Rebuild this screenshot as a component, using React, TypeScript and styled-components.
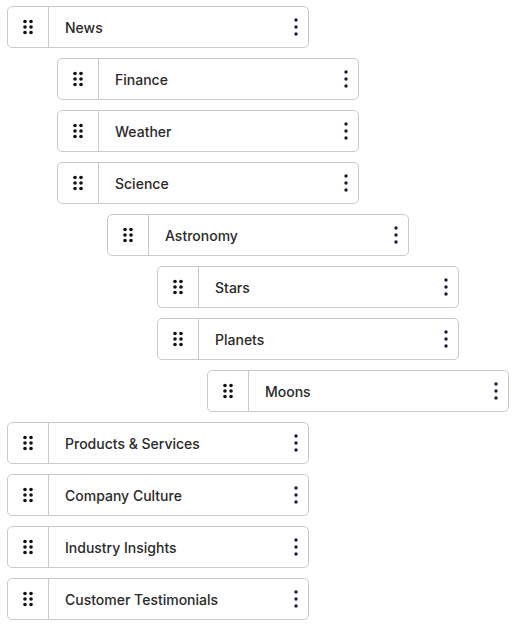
import React from "react";
import styled, { createGlobalStyle } from "styled-components";

const Global = createGlobalStyle`
  html, body { margin: 0; padding: 0; background: #ffffff; }
  body { font-family: Inter, "Noto Sans", sans-serif; }
`;

const List = styled.div`
  display: flex;
  flex-direction: column;
  gap: 10px;
  padding: 6px 0 0 7px;
`;

const Row = styled.div<{ $level: number }>`
  display: flex;
  align-items: stretch;
  box-sizing: border-box;
  width: 302px;
  height: 42px;
  margin-left: ${(p) => p.$level * 50}px;
  border: 1px solid #c9c9c9;
  border-radius: 5px;
  background: #fff;
`;

const Handle = styled.div`
  width: 40px;
  flex: none;
  display: flex;
  align-items: center;
  justify-content: center;
  border-right: 1px solid #c9c9c9;
  color: #111;
`;

const Label = styled.div`
  flex: 1;
  display: flex;
  align-items: center;
  padding-left: 16px;
  font-size: 14px;
  font-weight: 500;
  color: #2a2a2a;
`;

const Menu = styled.div`
  width: 24px;
  flex: none;
  display: flex;
  align-items: center;
  justify-content: center;
  color: #1b1b3a;
`;

const Grip = () => (
  <svg width="11" height="16" viewBox="0 0 11 16">
    {[0, 1].map((c) =>
      [0, 1, 2].map((r) => (
        <circle key={`${c}-${r}`} cx={2 + c * 6} cy={2.5 + r * 5.5} r="1.8" fill="currentColor" />
      ))
    )}
  </svg>
);

const Kebab = () => (
  <svg width="4" height="18" viewBox="0 0 4 18">
    {[0, 1, 2].map((r) => (
      <circle key={r} cx="2" cy={2 + r * 7} r="1.7" fill="currentColor" />
    ))}
  </svg>
);

const items: { label: string; level: number }[] = [
  { label: "News", level: 0 },
  { label: "Finance", level: 1 },
  { label: "Weather", level: 1 },
  { label: "Science", level: 1 },
  { label: "Astronomy", level: 2 },
  { label: "Stars", level: 3 },
  { label: "Planets", level: 3 },
  { label: "Moons", level: 4 },
  { label: "Products & Services", level: 0 },
  { label: "Company Culture", level: 0 },
  { label: "Industry Insights", level: 0 },
  { label: "Customer Testimonials", level: 0 },
];

export default function App() {
  return (
    <>
      <Global />
      <List>
        {items.map((it) => (
          <Row key={it.label} $level={it.level}>
            <Handle>
              <Grip />
            </Handle>
            <Label>{it.label}</Label>
            <Menu>
              <Kebab />
            </Menu>
          </Row>
        ))}
      </List>
    </>
  );
}
